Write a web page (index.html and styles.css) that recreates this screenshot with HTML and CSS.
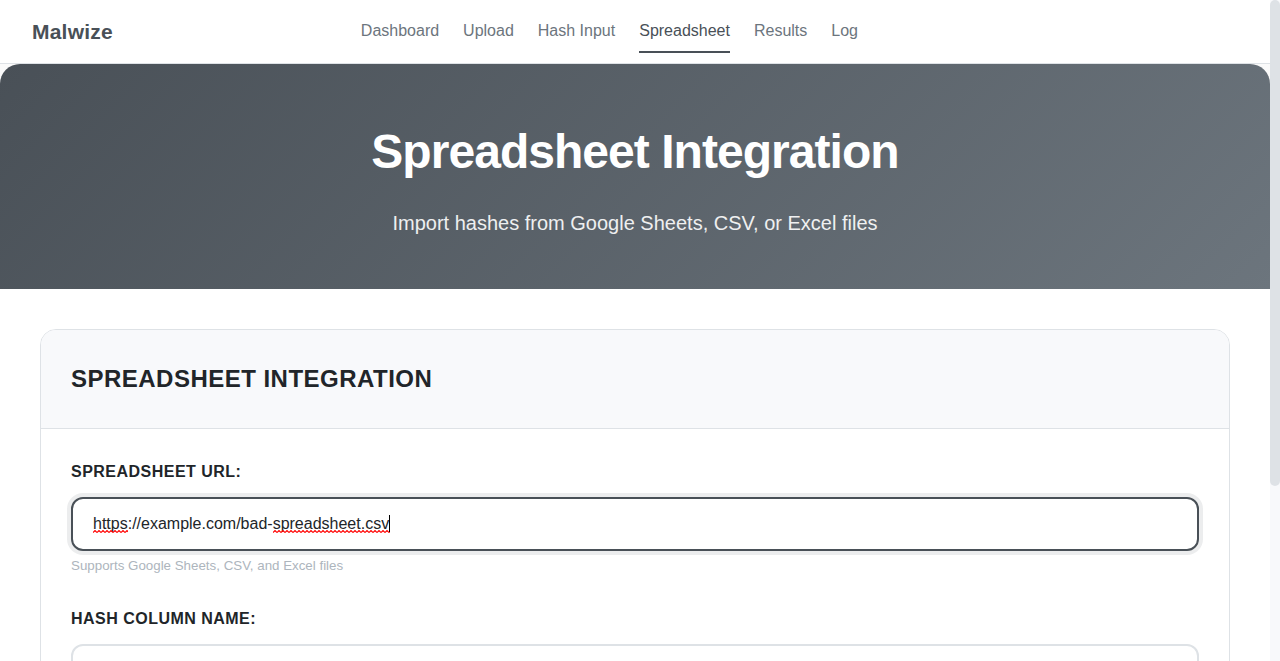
FILE: index.html
```html
<!DOCTYPE html>
<html lang="en">
<head>
<meta charset="utf-8">
<title>Malwize</title>
<link rel="stylesheet" href="styles.css">
</head>
<body>
<div class="page">
  <header class="topbar">
    <a class="brand" href="#">Malwize</a>
    <nav class="nav">
      <a href="#">Dashboard</a>
      <a href="#">Upload</a>
      <a href="#">Hash Input</a>
      <a href="#" class="active" aria-current="page">Spreadsheet</a>
      <a href="#">Results</a>
      <a href="#">Log</a>
    </nav>
    <div class="topbar-end"></div>
  </header>
  <main>
    <section class="hero">
      <h1>Spreadsheet Integration</h1>
      <p>Import hashes from Google Sheets, CSV, or Excel files</p>
    </section>
    <section class="content">
      <div class="card">
        <div class="card-header"><h2>Spreadsheet Integration</h2></div>
        <form class="card-body">
          <div class="field">
            <label for="url">Spreadsheet URL:</label>
            <div class="control">
              <input class="focused" id="url" type="text" spellcheck="false" value="https://example.com/bad-spreadsheet.csv">
              <svg class="marks" width="300" height="20" aria-hidden="true">
                <defs>
                  <pattern id="wave" width="4" height="3" patternUnits="userSpaceOnUse" y="15">
                    <path d="M0 2.5L2 .5L4 2.5" fill="none" stroke="#ff0000" stroke-width="1.1"/>
                  </pattern>
                </defs>
                <rect x="0" y="15" width="35" height="3" fill="url(#wave)"/>
                <rect x="180" y="15" width="117" height="3" fill="url(#wave)"/>
                <rect x="296" y="0" width="1" height="17" fill="#000"/>
              </svg>
            </div>
            <small>Supports Google Sheets, CSV, and Excel files</small>
          </div>
          <div class="field">
            <label for="column">Hash Column Name:</label>
            <input id="column" type="text">
          </div>
        </form>
      </div>
    </section>
  </main>
</div>
<div class="scroll-track" aria-hidden="true"><div class="scroll-thumb"></div></div>
</body>
</html>
```
FILE: styles.css
```css
* { box-sizing: border-box; margin: 0; padding: 0; }

body {
  display: flex;
  height: 100vh;
  overflow: hidden;
  font-family: "Liberation Sans", Arial, sans-serif;
  font-size: 16px;
  line-height: 1.6;
  color: #212529;
  background: #fff;
}

.page { flex: 1; min-width: 0; overflow-y: auto; scrollbar-width: none; }

.topbar {
  display: flex;
  align-items: center;
  justify-content: space-between;
  height: 64px;
  padding: 0 32px;
  background: #fff;
  border-bottom: 1px solid #dee2e6;
}
.topbar-end { width: 132px; }
.brand {
  font-size: 21px;
  font-weight: 700;
  letter-spacing: 0.01em;
  color: #495057;
  text-decoration: none;
}
.nav { display: flex; gap: 24px; }
.nav a {
  padding: 8px 0;
  color: #6c757d;
  text-decoration: none;
  border-bottom: 2px solid transparent;
}
.nav .active { color: #495057; border-bottom-color: #495057; }

main { background: #fafafa; }

.hero {
  padding: 50px 40px;
  text-align: center;
  color: #fff;
  background: linear-gradient(135deg, #495057 0%, #6c757d 100%);
  border-radius: 20px 20px 0 0;
}
.hero h1 {
  margin-bottom: 16px;
  font-size: 48px;
  letter-spacing: -0.02em;
}
.hero p { font-size: 20px; opacity: 0.9; }

.content { padding: 40px; background: #fff; }

.card {
  overflow: hidden;
  background: #fff;
  border: 1px solid #dee2e6;
  border-radius: 16px;
}
.card-header {
  padding: 30px;
  background: #f8f9fb;
  border-bottom: 1px solid #dee2e6;
}
.card-header h2 {
  font-size: 24px;
  letter-spacing: 0.02em;
  text-transform: uppercase;
}
.card-body { padding: 30px; }

.field { margin-bottom: 30px; }
.field label {
  display: block;
  margin-bottom: 12px;
  font-weight: 700;
  letter-spacing: 0.03em;
  text-transform: uppercase;
}
.field input {
  display: block;
  width: 100%;
  padding: 16px 20px;
  font: inherit;
  line-height: normal;
  color: #212529;
  background: #fff;
  border: 2px solid #dee2e6;
  border-radius: 12px;
  outline: none;
}
.field .focused, .field input:focus {
  border-color: #495057;
  box-shadow: 0 0 0 4px rgba(73, 80, 87, 0.1);
}
.field small {
  display: block;
  margin-top: 4px;
  font-size: smaller;
  color: #adb5bd;
}

.control { position: relative; }
.marks { position: absolute; left: 22px; top: 18px; pointer-events: none; }

.scroll-track { width: 10px; background: #f8f9fb; }
.scroll-thumb { height: 73.5%; background: #dee2e6; border-radius: 5px; }
```
